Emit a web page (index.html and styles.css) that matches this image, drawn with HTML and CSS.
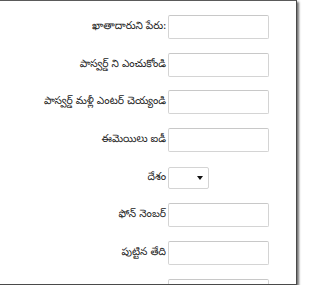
FILE: index.html
```html
<!DOCTYPE html>
<html lang="te">
<head>
<meta charset="utf-8">
<link rel="stylesheet" href="styles.css">
</head>
<body>
<div class="frame">
  <form class="form">
    <label class="lbl">ఖాతాదారుని పేరు:</label><input class="field" type="text">
    <label class="lbl">పాస్వర్డ్ ని ఎంచుకోండి</label><input class="field" type="text">
    <label class="lbl">పాస్వర్డ్ మళ్లీ ఎంటర్ చెయ్యండి</label><input class="field" type="text">
    <label class="lbl">ఈమెయిలు ఐడీ</label><input class="field" type="text">
    <label class="lbl">దేశం</label><span class="sel"><span class="arrow"></span></span>
    <label class="lbl">ఫోన్ నెంబర్</label><input class="field" type="text">
    <label class="lbl">పుట్టిన తేది</label><input class="field" type="text">
    <label class="lbl">లింగం</label><input class="field" type="text">
  </form>
</div>
</body>
</html>
```
FILE: styles.css
```css
html, body {
  margin: 0;
  padding: 0;
  background: #ffffff;
}
.frame {
  width: 296px;
  height: 283px;
  border-top: 1px solid #5a5a5a;
  border-right: 1px solid #4a4a4a;
  border-bottom: 1px solid #4a4a4a;
  background: #ffffff;
  overflow: hidden;
  box-shadow: 2px 2px 2px rgba(0, 0, 0, 0.55);
  position: relative;
}
.form {
  display: grid;
  grid-template-columns: 166px 101px;
  grid-auto-rows: 24px;
  column-gap: 2px;
  row-gap: 13.7px;
  padding-top: 14px;
  margin: 0;
}
.lbl {
  font-family: "Noto Sans Telugu", "Gautami", "Noto Sans", sans-serif;
  font-size: 10.5px;
  line-height: 24px;
  color: #222;
  text-align: right;
  align-self: center;
  white-space: nowrap;
}
.field {
  box-sizing: border-box;
  width: 101px;
  height: 24px;
  border: 1px solid #d4d4d4;
  border-top-color: #c8c8c8;
  border-radius: 2px;
  background: #fff;
  margin: 0;
  padding: 0;
}
.sel {
  box-sizing: border-box;
  width: 41px;
  height: 22px;
  align-self: center;
  border: 1px solid #d4d4d4;
  border-radius: 2px;
  background: #fff;
  display: flex;
  align-items: center;
  justify-content: flex-end;
  padding-right: 5px;
}
.arrow {
  width: 0;
  height: 0;
  border-left: 3px solid transparent;
  border-right: 3px solid transparent;
  border-top: 4px solid #111;
}
```
